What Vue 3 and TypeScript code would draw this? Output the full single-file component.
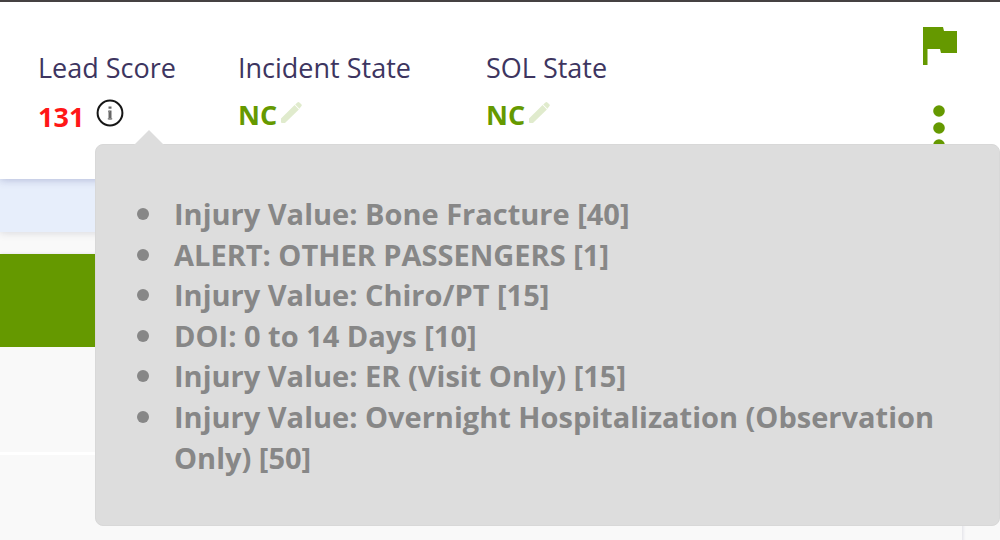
<script setup lang="ts">
interface StateField {
  id: string
  label: string
  value: string
}

const fields: StateField[] = [
  { id: 'incident', label: 'Incident State', value: 'NC' },
  { id: 'sol', label: 'SOL State', value: 'NC' },
]

const scoreItems: string[] = [
  'Injury Value: Bone Fracture [40]',
  'ALERT: OTHER PASSENGERS [1]',
  'Injury Value: Chiro/PT [15]',
  'DOI: 0 to 14 Days [10]',
  'Injury Value: ER (Visit Only) [15]',
  'Injury Value: Overnight Hospitalization (Observation Only) [50]',
]
</script>

<template>
  <div class="page">
    <header class="header">
      <dl class="summary">
        <div class="field lead">
          <dt>Lead Score</dt>
          <dd class="score">
            <span>131</span>
            <button class="icon-button" type="button" aria-label="Score details" aria-describedby="score-details">
              <svg width="28" height="28" viewBox="0 0 28 28" fill="none" stroke="#161616">
                <circle cx="14" cy="14" r="12.4" stroke-width="2" />
                <path d="M14 7.500v2.200" stroke="#666" stroke-width="3" />
                <path d="M14 11.500V20.500" stroke="#666" stroke-width="3" />
                <path d="M12 12.500h2M11.800 19.800h4.400" stroke="#888" stroke-width="1.500" />
              </svg>
            </button>
          </dd>
        </div>
        <div v-for="field in fields" :key="field.id" class="field" :class="field.id">
          <dt>{{ field.label }}</dt>
          <dd class="state">
            <span>{{ field.value }}</span>
            <button class="icon-button" type="button" :aria-label="`Edit ${field.label}`">
              <svg width="22" height="24" viewBox="0 0 22 24" fill="#e0ebcd">
                <path d="M1 17.500 14.600 4.100l4.300 4.300L5 22H2q-1 0-1-1z" />
                <path d="m15.200 3.600 2.200-2.200q1-1 2 0l1.900 1.900q1 1 0 2L19.400 7.800z" />
              </svg>
            </button>
          </dd>
        </div>
      </dl>
      <div class="actions">
        <button class="icon-button" type="button" aria-label="Flag lead">
          <svg width="36" height="40" viewBox="0 0 36 40" fill="#659900">
            <path d="M1 1h20l1 4h13v22H19l-1-4H5.500v16H1z" />
          </svg>
        </button>
        <button class="icon-button" type="button" aria-label="More actions">
          <svg width="16" height="48" viewBox="0 0 16 48" fill="#659900">
            <circle cx="7" cy="7" r="5.800" />
            <circle cx="7" cy="24" r="5.800" />
            <circle cx="7" cy="41" r="5.800" />
          </svg>
        </button>
      </div>
      <div id="score-details" class="popover" role="tooltip">
        <ul>
          <li v-for="item in scoreItems" :key="item">{{ item }}</li>
        </ul>
      </div>
    </header>
    <div class="band"></div>
    <main class="content">
      <section class="panel">
        <div class="panel-head"></div>
        <div class="panel-row"></div>
        <div class="panel-row"></div>
      </section>
    </main>
  </div>
</template>

<style>
body {
  margin: 0;
  background: #f9f9f9;
}
</style>

<style scoped>
.page {
  display: flex;
  flex-direction: column;
  height: 100vh;
  overflow: hidden;
  font-family: "Open Sans", "Noto Sans", sans-serif;
}

.header {
  position: relative;
  z-index: 2;
  display: flex;
  justify-content: space-between;
  box-sizing: border-box;
  min-height: 179px;
  padding: 0 42px 0 38px;
  border-top: 2px solid #454142;
  background: #fff;
  box-shadow: 0 1px 8px rgba(60, 70, 140, 0.3);
}

.summary {
  display: flex;
  margin: 0;
  padding-top: 48px;
}

.field {
  white-space: nowrap;
}

.lead {
  width: 200px;
}

.incident {
  width: 248px;
}

dt {
  color: #3d3560;
  font-size: 27px;
  font-weight: 400;
  line-height: 36px;
}

dd {
  display: flex;
  margin: 0;
  font-size: 27px;
  font-weight: 700;
  line-height: 36px;
}

.score {
  gap: 12px;
  padding-top: 13px;
  color: #ff1717;
}

.score .icon-button {
  height: 28px;
}

.state {
  gap: 3px;
  padding-top: 11px;
  color: #659900;
}

.state .icon-button {
  padding-top: 4px;
}

.icon-button {
  display: flex;
  padding: 0;
  border: 0;
  background: none;
  cursor: pointer;
}

.actions {
  display: flex;
  flex-direction: column;
  align-items: center;
  gap: 38px;
  padding-top: 24px;
}

.popover {
  position: absolute;
  top: 142px;
  right: 0;
  left: 95px;
  box-sizing: border-box;
  padding: 49px 40px 47px 78px;
  border: 1px solid #d8d8d8;
  border-radius: 8px;
  background: #ddd;
  color: #878787;
}

.popover::before {
  position: absolute;
  top: -15px;
  left: 38px;
  border: 15px solid transparent;
  border-top: 0;
  border-bottom-color: #ddd;
  content: "";
}

ul {
  margin: 0;
  padding: 0;
  list-style: none;
}

li {
  position: relative;
  font-size: 29px;
  font-weight: 700;
  line-height: 1.4;
}

li::before {
  position: absolute;
  top: 14px;
  left: -37px;
  width: 12px;
  height: 12px;
  border-radius: 50%;
  background: #878787;
  content: "";
}

.band {
  position: relative;
  z-index: 1;
  flex: none;
  height: 53px;
  background: #e7eefb;
  box-shadow: 0 1px 8px rgba(50, 50, 80, 0.16);
}

.content {
  flex: 1;
  padding: 22px 38px 0 0;
  background: #f9f9f9;
}

.panel {
  display: flex;
  flex-direction: column;
  height: 100%;
  box-shadow: 1px 0 3px rgba(40, 40, 100, 0.12);
}

.panel-head {
  flex: none;
  height: 93px;
  background: #659900;
}

.panel-row {
  flex: none;
  height: 105px;
  border-bottom: 3px solid #fff;
  background: #f9f9f9;
}
</style>
